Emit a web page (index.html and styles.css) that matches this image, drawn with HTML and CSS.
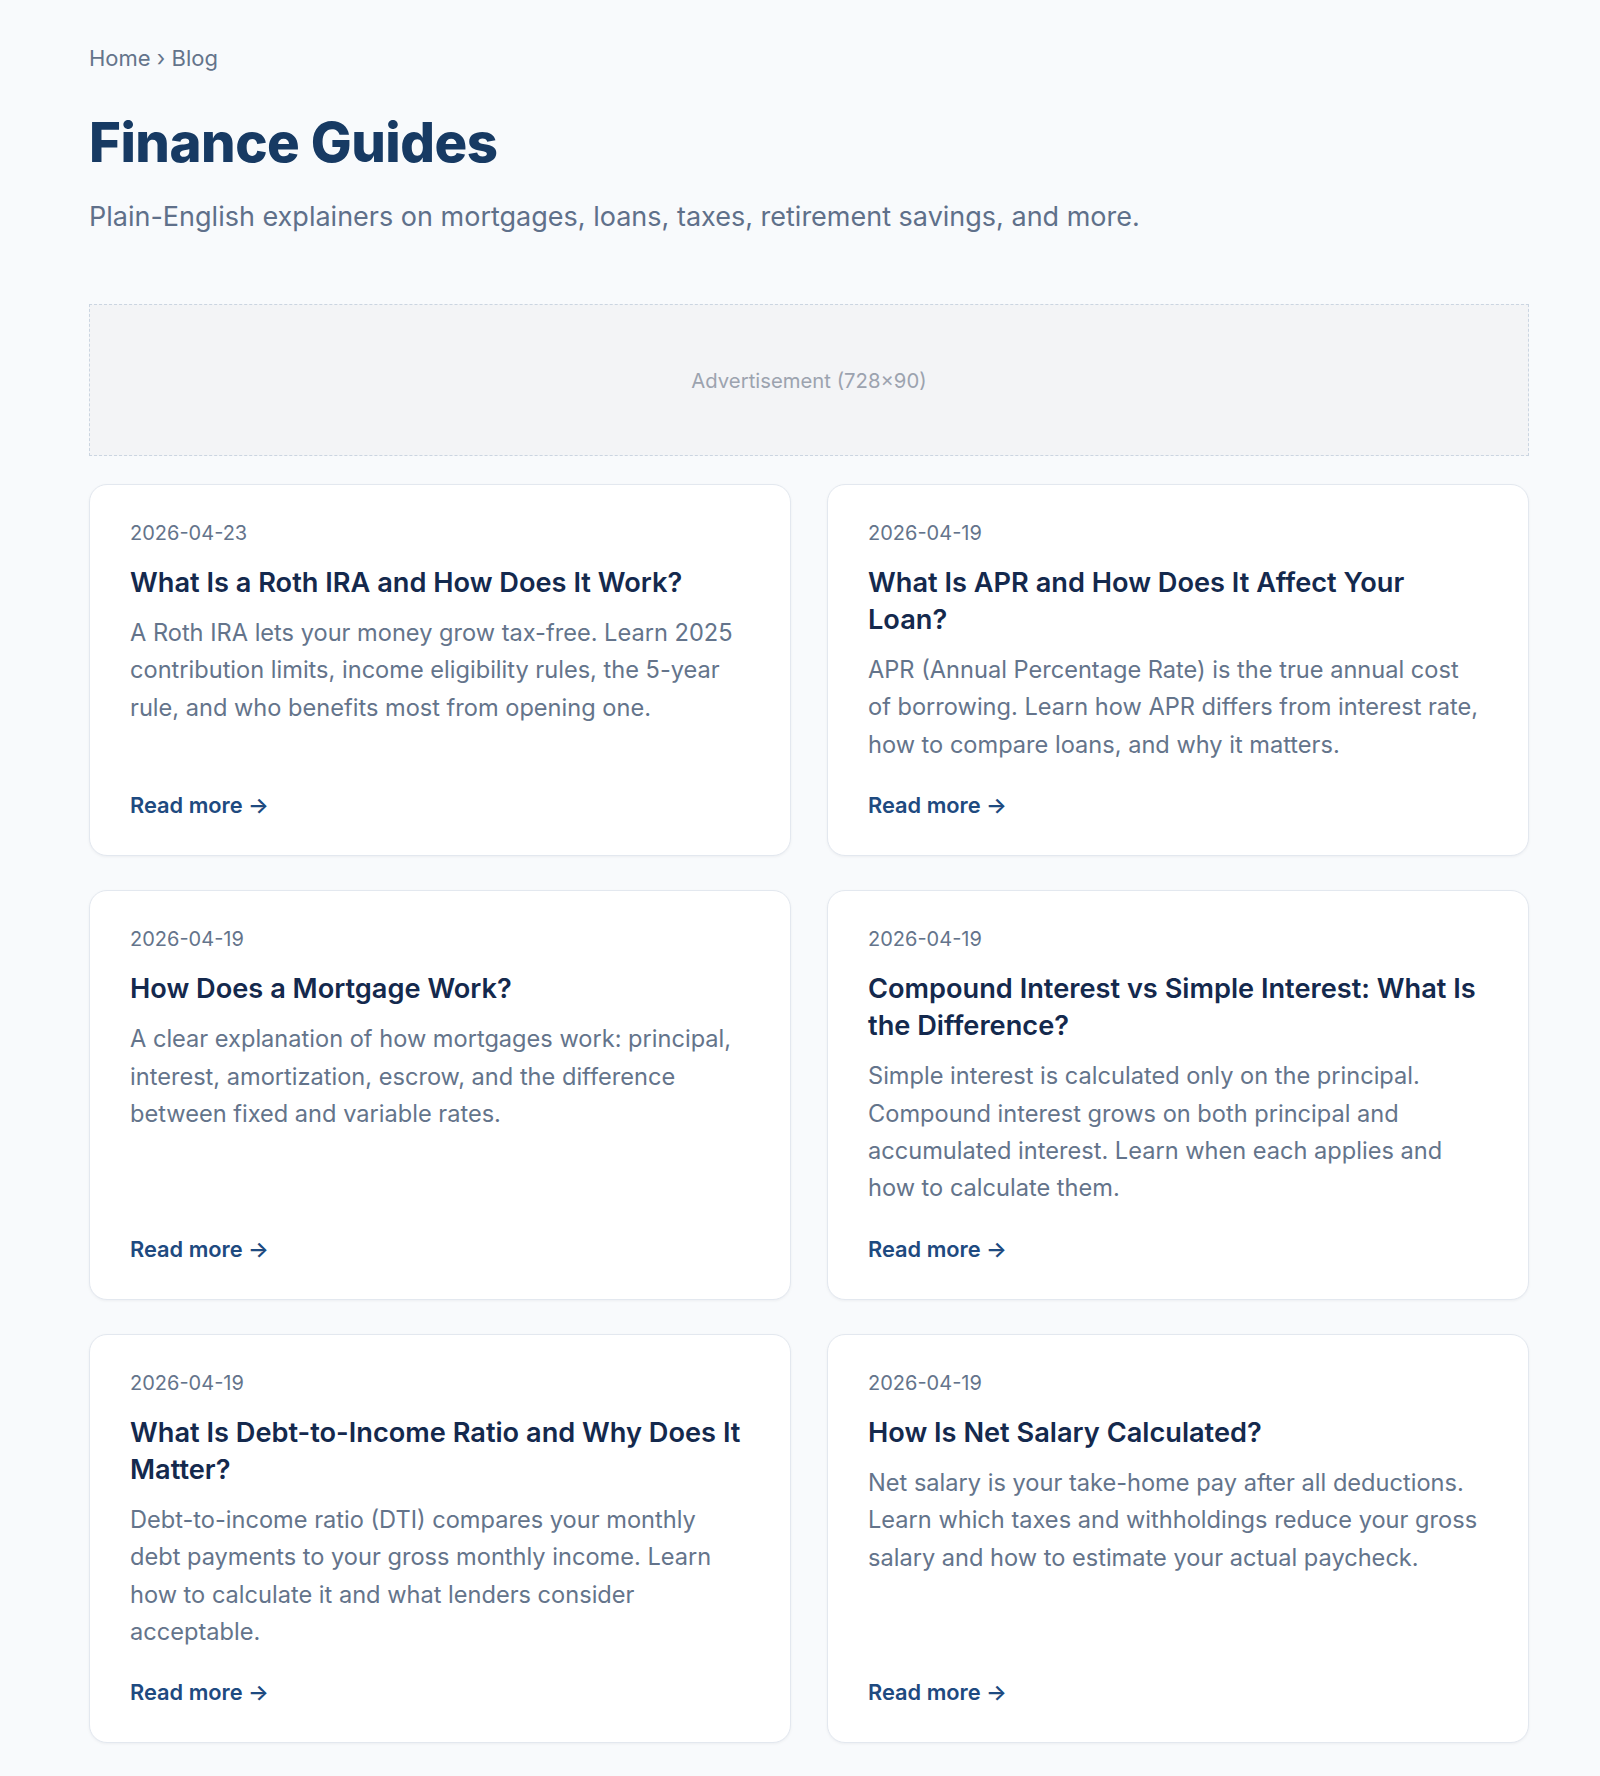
FILE: index.html
```html
<!DOCTYPE html>
<html lang="en">
<head>
<meta charset="utf-8">
<title>Finance Guides</title>
<link rel="stylesheet" href="styles.css">
</head>
<body>
<main class="page">
  <nav class="breadcrumb"><a href="#">Home</a> › <span>Blog</span></nav>
  <h1 class="title">Finance Guides</h1>
  <p class="lead">Plain-English explainers on mortgages, loans, taxes, retirement savings, and more.</p>

  <div class="ad">Advertisement (728×90)</div>

  <section class="grid">
    <article class="card">
      <div class="date">2026-04-23</div>
      <h2 class="card-title">What Is a Roth IRA and How Does It Work?</h2>
      <p class="card-text">A Roth IRA lets your money grow tax-free. Learn 2025 contribution limits, income eligibility rules, the 5-year rule, and who benefits most from opening one.</p>
      <a class="more" href="#">Read more →</a>
    </article>
    <article class="card">
      <div class="date">2026-04-19</div>
      <h2 class="card-title">What Is APR and How Does It Affect Your Loan?</h2>
      <p class="card-text">APR (Annual Percentage Rate) is the true annual cost of borrowing. Learn how APR differs from interest rate, how to compare loans, and why it matters.</p>
      <a class="more" href="#">Read more →</a>
    </article>
    <article class="card">
      <div class="date">2026-04-19</div>
      <h2 class="card-title">How Does a Mortgage Work?</h2>
      <p class="card-text">A clear explanation of how mortgages work: principal, interest, amortization, escrow, and the difference between fixed and variable rates.</p>
      <a class="more" href="#">Read more →</a>
    </article>
    <article class="card">
      <div class="date">2026-04-19</div>
      <h2 class="card-title">Compound Interest vs Simple Interest: What Is the Difference?</h2>
      <p class="card-text">Simple interest is calculated only on the principal. Compound interest grows on both principal and accumulated interest. Learn when each applies and how to calculate them.</p>
      <a class="more" href="#">Read more →</a>
    </article>
    <article class="card">
      <div class="date">2026-04-19</div>
      <h2 class="card-title">What Is Debt-to-Income Ratio and Why Does It Matter?</h2>
      <p class="card-text">Debt-to-income ratio (DTI) compares your monthly debt payments to your gross monthly income. Learn how to calculate it and what lenders consider acceptable.</p>
      <a class="more" href="#">Read more →</a>
    </article>
    <article class="card">
      <div class="date">2026-04-19</div>
      <h2 class="card-title">How Is Net Salary Calculated?</h2>
      <p class="card-text">Net salary is your take-home pay after all deductions. Learn which taxes and withholdings reduce your gross salary and how to estimate your actual paycheck.</p>
      <a class="more" href="#">Read more →</a>
    </article>
  </section>
</main>
</body>
</html>
```

FILE: styles.css
```css
* { box-sizing: border-box; }

html, body {
  margin: 0;
  padding: 0;
}

body {
  background: #f8fafc;
  font-family: Inter, "Noto Sans", "Liberation Sans", sans-serif;
  color: #1e293b;
}

.page {
  width: 1440px;
  margin: 0 0 0 89px;
  padding: 45px 0 40px;
}

.breadcrumb {
  font-size: 22px;
  line-height: 27px;
  color: #64748b;
}

.breadcrumb a {
  color: #64748b;
  text-decoration: none;
}

.title {
  margin: 39px 0 0;
  font-size: 54.5px;
  line-height: 62px;
  font-weight: 800;
  color: #173a63;
  letter-spacing: -0.5px;
}

.lead {
  margin: 25px 0 0;
  font-size: 27px;
  line-height: 38px;
  color: #5f708a;
}

.ad {
  margin-top: 68px;
  height: 152px;
  display: flex;
  align-items: center;
  justify-content: center;
  background: #f3f4f6;
  border: 1.5px dashed #cbd5e1;
  color: #9ca3af;
  font-size: 20.3px;
}

.grid {
  margin-top: 28px;
  display: grid;
  grid-template-columns: 1fr 1fr;
  column-gap: 36px;
  row-gap: 34px;
}

.card {
  display: flex;
  flex-direction: column;
  background: #ffffff;
  border: 1.5px solid #e3e8ef;
  border-radius: 18px;
  padding: 35px 43px 35px 40px;
  box-shadow: 0 1px 3px rgba(15, 23, 42, 0.05);
}

.date {
  font-size: 20px;
  line-height: 26px;
  color: #64748b;
}

.card-title {
  margin: 18px 0 0;
  font-size: 27.2px;
  line-height: 37px;
  font-weight: 600;
  color: #14294d;
}

.card-text {
  margin: 13px 0 0;
  font-size: 23.6px;
  line-height: 37.4px;
  color: #64748b;
}

.more {
  margin-top: auto;
  padding-top: 27px;
  font-size: 21.8px;
  line-height: 30px;
  font-weight: 600;
  color: #1e4a80;
  text-decoration: none;
}
```
